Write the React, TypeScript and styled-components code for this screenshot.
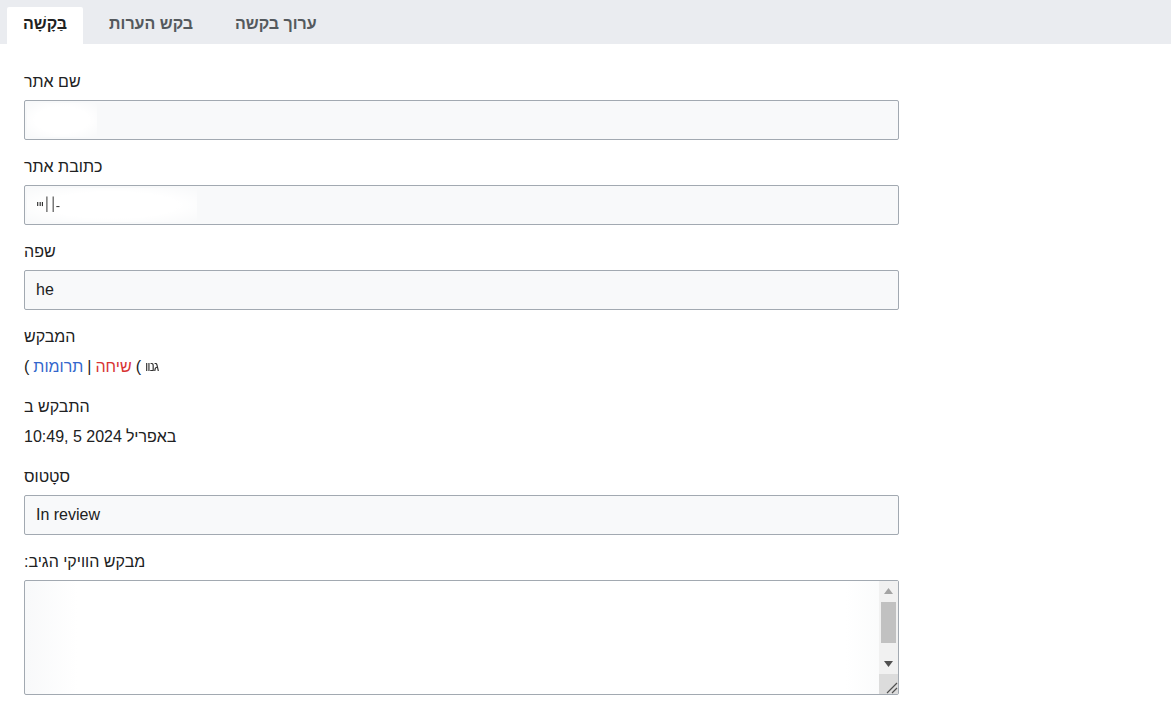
import React from "react";
import styled, { createGlobalStyle } from "styled-components";

const GlobalStyle = createGlobalStyle`
  html, body { margin: 0; padding: 0; background: #ffffff; }
  body { font-family: "Liberation Sans", Arial, sans-serif; color: #202122; }
  * { box-sizing: border-box; }
`;

const Page = styled.div`
  width: 1171px;
  min-height: 713px;
  background: #ffffff;
`;

const TabBar = styled.div`
  display: flex;
  align-items: flex-end;
  height: 44px;
  background: #eaecf0;
  padding-left: 7px;
  gap: 10px;
`;

const Tab = styled.div<{ $active?: boolean }>`
  height: 37px;
  display: flex;
  align-items: center;
  padding: 0 16px 3px 16px;
  font-size: 16px;
  font-weight: bold;
  color: ${(p) => (p.$active ? "#202122" : "#54595d")};
  background: ${(p) => (p.$active ? "#ffffff" : "transparent")};
  border-radius: 2px 2px 0 0;
`;

const Form = styled.div`
  display: flex;
  flex-direction: column;
  gap: 17px;
  padding: 28px 0 0 24px;
  width: 899px;
`;

const Field = styled.div`
  display: flex;
  flex-direction: column;
`;

const Label = styled.div<{ $gap?: number }>`
  font-size: 16px;
  line-height: 20px;
  margin-bottom: ${(p) => p.$gap ?? 8}px;
`;

const Input = styled.div`
  height: 40px;
  display: flex;
  align-items: center;
  padding: 0 11px;
  background: #f8f9fa;
  border: 1px solid #a2a9b1;
  border-radius: 2px;
  font-size: 16px;
  color: #202122;
  position: relative;
  overflow: hidden;
`;

const Smudge = styled.span<{ $w: number }>`
  position: absolute;
  left: 2px;
  top: 2px;
  bottom: 2px;
  width: ${(p) => p.$w}px;
  background: radial-gradient(ellipse at center, #ffffff 55%, rgba(255, 255, 255, 0) 100%);
`;

const Blurred = styled.span`
  position: relative;
  font-size: 13px;
  letter-spacing: -1px;
  color: #303030;
  filter: blur(0.6px);
`;

const Value = styled.div`
  font-size: 16px;
  line-height: 20px;
  padding-bottom: 3px;
  display: flex;
  align-items: center;
  gap: 4px;
`;

const Link = styled.span<{ $red?: boolean }>`
  color: ${(p) => (p.$red ? "#d73333" : "#3366cc")};
`;

const Sep = styled.span`
  color: #202122;
`;

const AreaWrap = styled.div`
  position: relative;
  height: 115px;
`;

const Area = styled.textarea`
  display: block;
  height: 115px;
  width: 100%;
  resize: none;
  overflow: hidden;
  background: linear-gradient(90deg, #f8f9fa 0%, #ffffff 6%, #ffffff 94%, #f8f9fa 100%);
  border: 1px solid #a2a9b1;
  border-radius: 2px;
  font-family: "Liberation Sans", Arial, sans-serif;
  font-size: 16px;
  line-height: 22px;
  padding: 6px 11px;
  color: #f8f9fa;
`;

const ScrollBar = styled.div`
  position: absolute;
  top: 1px;
  right: 1px;
  bottom: 1px;
  width: 19px;
  background: #f1f1f1;
  display: flex;
  flex-direction: column;
`;

const ArrowBtn = styled.div`
  height: 20px;
  display: flex;
  align-items: center;
  justify-content: center;
`;

const Track = styled.div`
  flex: 1;
  padding: 1px 2px 0 2px;
`;

const Thumb = styled.div`
  height: 41px;
  background: #c1c1c1;
`;

const Corner = styled.div`
  height: 20px;
  background: #dcdcdc;
  display: flex;
  align-items: flex-end;
  justify-content: flex-end;
`;

const areaText = "\n\n\n\n\n";

export default function App() {
  return (
    <Page>
      <GlobalStyle />
      <TabBar>
        <Tab $active>בַּקָשָׁה</Tab>
        <Tab>בקש הערות</Tab>
        <Tab>ערוך בקשה</Tab>
      </TabBar>
      <Form>
        <Field>
          <Label>שם אתר</Label>
          <Input>
            <Smudge $w={70} />
          </Input>
        </Field>
        <Field>
          <Label>כתובת אתר</Label>
          <Input>
            <Smudge $w={170} />
            <Blurred>׀׀ייי-</Blurred>
          </Input>
        </Field>
        <Field>
          <Label>שפה</Label>
          <Input>he</Input>
        </Field>
        <Field>
          <Label $gap={10}>המבקש</Label>
          <Value>
            <span>(</span>
            <Link>תרומות</Link>
            <Sep>|</Sep>
            <Link $red>שיחה</Link>
            <span>(</span>
            <Blurred>גנוו</Blurred>
          </Value>
        </Field>
        <Field>
          <Label $gap={10}>התבקש ב</Label>
          <Value>
            <span>10:49, 5 2024</span>
            <span>באפריל</span>
          </Value>
        </Field>
        <Field>
          <Label>סטָטוס</Label>
          <Input>In review</Input>
        </Field>
        <Field>
          <Label $gap={8}>:מבקש הוויקי הגיב</Label>
          <AreaWrap>
            <Area readOnly defaultValue={areaText} />
            <ScrollBar>
              <ArrowBtn>
                <svg width="9" height="6" viewBox="0 0 9 6">
                  <path d="M0 6 L4.5 0 L9 6 Z" fill="#a3a3a3" />
                </svg>
              </ArrowBtn>
              <Track>
                <Thumb />
              </Track>
              <ArrowBtn>
                <svg width="9" height="6" viewBox="0 0 9 6">
                  <path d="M0 0 L4.5 6 L9 0 Z" fill="#505050" />
                </svg>
              </ArrowBtn>
              <Corner>
                <svg width="14" height="14" viewBox="0 0 14 14">
                  <path d="M3 13 L13 3 M8 13 L13 8" stroke="#505050" strokeWidth="1.2" fill="none" />
                </svg>
              </Corner>
            </ScrollBar>
          </AreaWrap>
        </Field>
      </Form>
    </Page>
  );
}
